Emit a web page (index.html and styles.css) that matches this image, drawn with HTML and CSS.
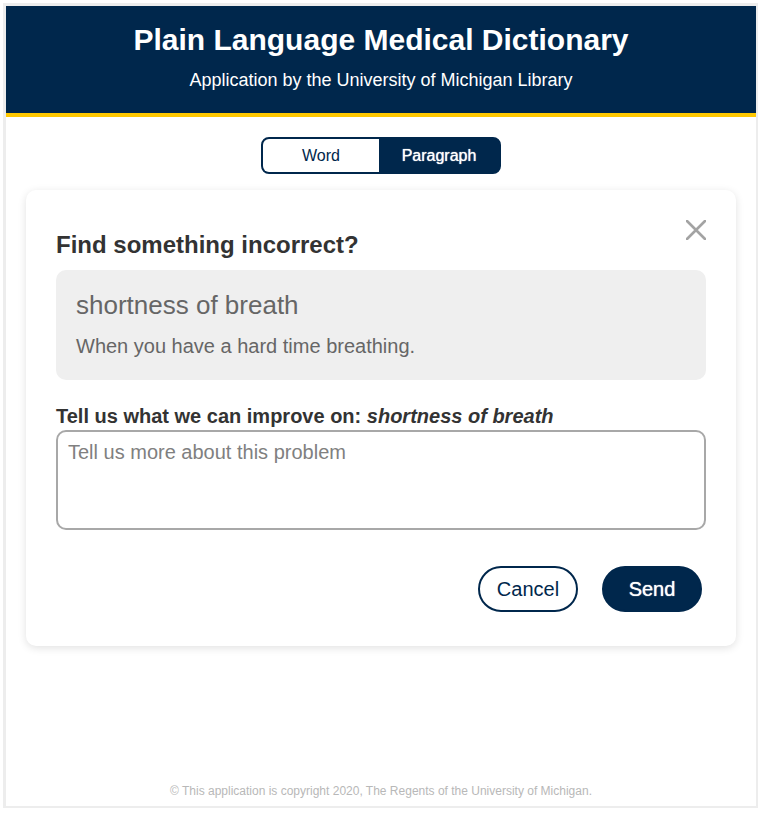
FILE: index.html
```html
<!DOCTYPE html>
<html lang="en">
<head>
<meta charset="utf-8">
<meta name="viewport" content="width=device-width, initial-scale=1">
<title>Plain Language Medical Dictionary</title>
<link rel="stylesheet" href="styles.css">
</head>
<body>
<div class="app">
  <header class="header">
    <h1 class="title">Plain Language Medical Dictionary</h1>
    <p class="subtitle">Application by the University of Michigan Library</p>
  </header>
  <main class="main">
    <div class="tabs">
      <button class="tab" type="button">Word</button>
      <button class="tab tab-active" type="button">Paragraph</button>
    </div>
    <form class="card">
      <div class="card-head">
        <h2 class="card-title">Find something incorrect?</h2>
        <button class="close" type="button" aria-label="Close">
          <svg width="20" height="20" viewBox="0 0 20 20" fill="none" stroke="#a3a3a3" stroke-width="2.6" stroke-linecap="round"><path d="M1 1l18 18M19 1L1 19"/></svg>
        </button>
      </div>
      <section class="entry">
        <h3 class="term">shortness of breath</h3>
        <p class="definition">When you have a hard time breathing.</p>
      </section>
      <label class="label" for="feedback">Tell us what we can improve on: <em>shortness of breath</em></label>
      <textarea class="feedback" id="feedback" placeholder="Tell us more about this problem"></textarea>
      <div class="actions">
        <button class="button" type="button">Cancel</button>
        <button class="button button-primary" type="submit">Send</button>
      </div>
    </form>
  </main>
  <footer class="footer">© This application is copyright 2020, The Regents of the University of Michigan.</footer>
</div>
</body>
</html>
```
FILE: styles.css
```css
* { box-sizing: border-box; }
body {
  margin: 0;
  padding: 3px 7px 14px 3px;
  min-height: 100vh;
  display: flex;
  background: #fff;
  color: #333;
  font-family: "Liberation Sans", Arial, sans-serif;
}
h1, h2, h3, p { margin: 0; font-weight: normal; }
button, textarea { font-family: inherit; }
.app {
  flex: 1;
  display: flex;
  flex-direction: column;
  border: solid #ededed;
  border-width: 3px 2px 2px 3px;
}
.header {
  padding: 16px 20px 20px;
  border-bottom: 4px solid #ffc800;
  background: #00274c;
  color: #fff;
  text-align: center;
}
.title { font-size: 30px; line-height: 36px; font-weight: bold; }
.subtitle { margin-top: 10px; font-size: 18px; line-height: 25px; }
.main { flex: 1; padding: 20px; }
.tabs {
  display: flex;
  width: 240px;
  margin: 0 auto 16px;
  border: 2px solid #00274c;
  border-radius: 8px;
  background: #00274c;
}
.tab {
  flex: 116;
  height: 33px;
  padding: 0;
  border: 0;
  border-radius: 6px 0 0 6px;
  background: #fff;
  color: #00274c;
  font-size: 16px;
}
.tab-active {
  flex: 120;
  border-radius: 0 6px 6px 0;
  background: #00274c;
  color: #fff;
  text-shadow: 0 0 1px #fff;
}
.card {
  padding: 30px 30px 34px;
  border-radius: 10px;
  background: #fff;
  box-shadow: 0 2px 8px rgba(0, 0, 0, 0.12);
}
.card-head {
  display: flex;
  justify-content: space-between;
  align-items: flex-start;
  margin-bottom: 10px;
}
.card-title { padding-top: 10px; font-size: 24px; line-height: 30px; font-weight: bold; }
.close { display: flex; padding: 0; border: 0; background: none; }
.entry { padding: 20px; border-radius: 10px; background: #efefef; color: #666; }
.term { font-size: 26px; line-height: 30px; }
.definition { margin-top: 12px; font-size: 20px; line-height: 28px; }
.label { display: block; margin-top: 22px; font-size: 20px; line-height: 28px; font-weight: bold; }
.feedback {
  display: block;
  width: 100%;
  height: 100px;
  padding: 8px 10px;
  border: 2px solid #a8a8a8;
  border-radius: 10px;
  background: #fff;
  font-size: 20px;
  line-height: 24px;
  resize: none;
}
.feedback::placeholder { color: #808080; }
.actions { display: flex; justify-content: flex-end; gap: 24px; margin-top: 36px; padding-right: 4px; }
.button {
  width: 100px;
  height: 46px;
  padding: 0;
  border: 2px solid #00274c;
  border-radius: 23px;
  background: #fff;
  color: #00274c;
  font-size: 20px;
}
.button-primary { background: #00274c; color: #fff; text-shadow: 0 0 1px #fff; }
.footer { padding: 0 20px 7px; color: #b8b8b8; font-size: 12px; line-height: 16px; text-align: center; }
```
